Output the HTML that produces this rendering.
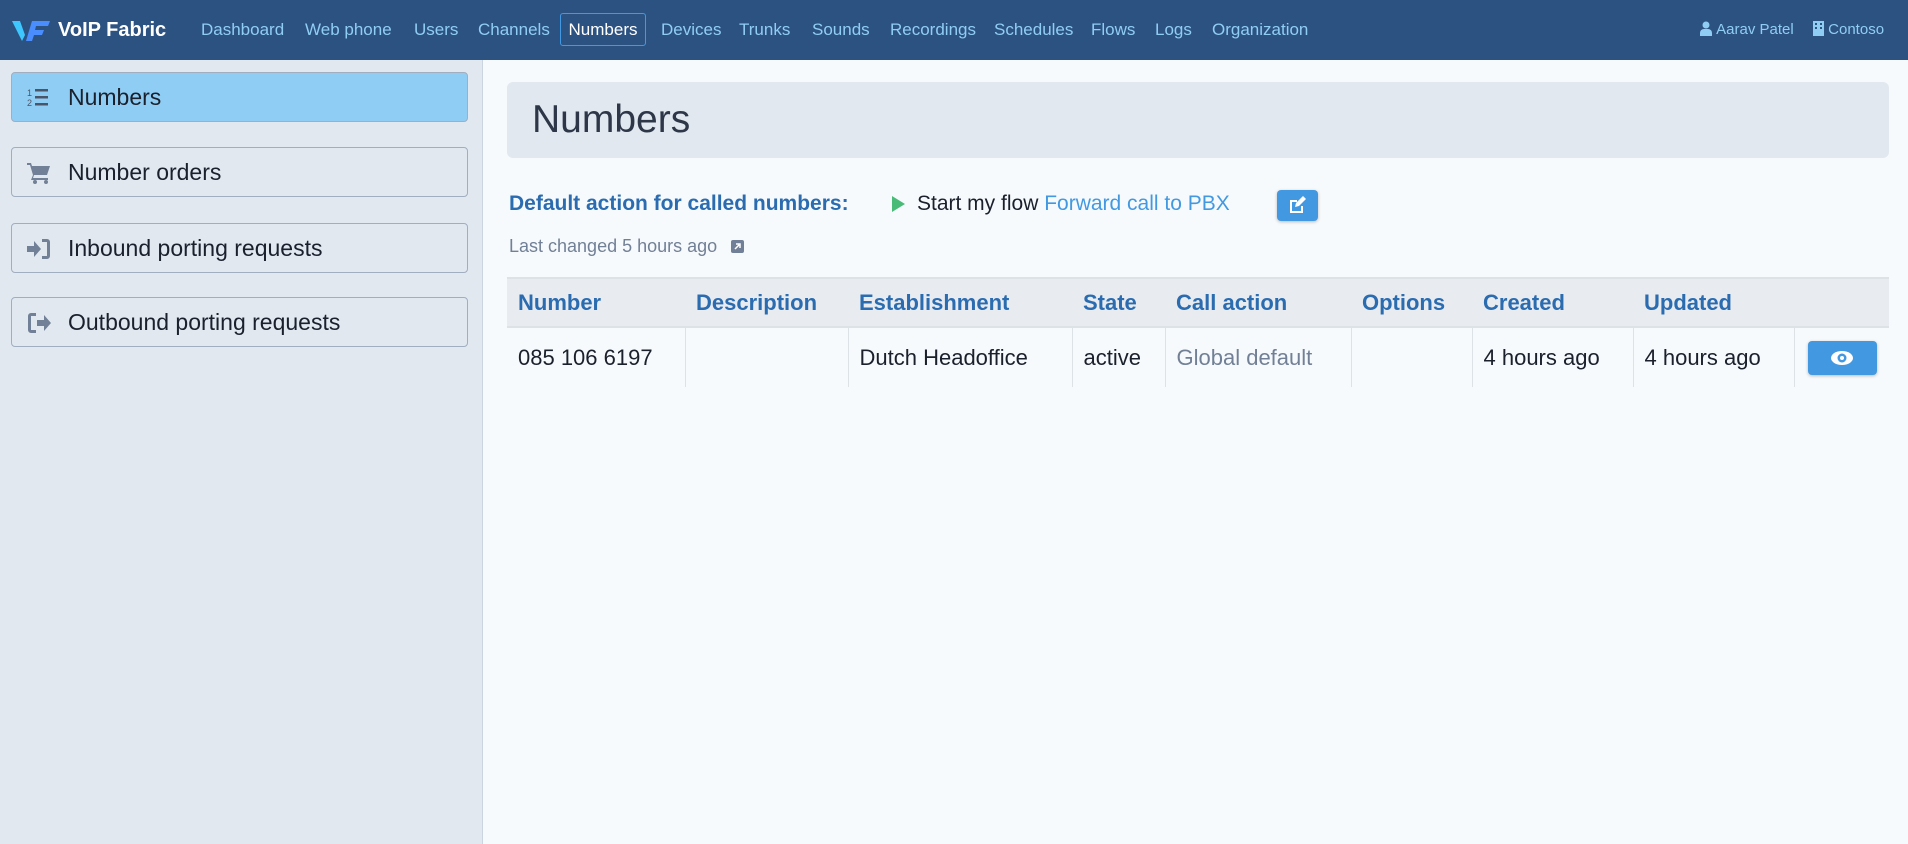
<!DOCTYPE html>
<html><head><meta charset="utf-8"><style>
*{box-sizing:border-box;margin:0;padding:0}
body{width:1908px;height:844px;overflow:hidden;font-family:"Liberation Sans",sans-serif;background:#f7fafc;position:relative}
.nav{position:absolute;left:0;top:0;width:1908px;height:60px;background:#2c5282}
.nav a{position:absolute;top:20px;font-size:17px;color:#90cdf4;white-space:nowrap}
.logo{position:absolute;left:12px;top:17px;display:flex;align-items:center;color:#fff;font-size:20px;font-weight:bold}
.side{position:absolute;left:0;top:60px;width:483px;height:784px;background:#e2e8f0;border-right:1px solid #cbd5e0}
.item{position:absolute;left:11px;width:457px;height:50px;border:1px solid #a0aec0;border-radius:4px;font-size:23px;color:#1a202c;padding-left:56px;line-height:48px}
.item svg{position:absolute;left:15px;top:14px}
.hdr{position:absolute;left:507px;top:82px;width:1382px;height:76px;background:#e2e8f0;border-radius:6px;font-size:39px;color:#2d3748;padding-left:25px;line-height:76px}
.t{position:absolute;white-space:nowrap}
table{position:absolute;left:507px;top:277px;width:1382px;border-collapse:collapse}
th{height:49px;background:#e8ecf0;color:#2b6cb0;font-size:22px;font-weight:600;text-align:left;padding-left:11px;border-top:2px solid #dde2e7;border-bottom:2px solid #dde2e7}
td{height:60px;font-size:22px;color:#1a202c;padding-left:11px;border-left:1px solid #dde2e7}
td:first-child{border-left:none}
.btn{display:inline-block;background:#4299e1;border-radius:4px;box-shadow:0 1px 3px rgba(0,0,0,.25)}
</style></head><body>
<div class="nav">
 <div class="logo"><svg width="38" height="26" viewBox="0 0 38 26"><path d="M0 4 L8 4 L13 18 L10 24 Z" fill="#3ec6ff"/><path d="M14 24 L20 4 L38 4 L36 9 L24 9 L23 13 L32 13 L30 18 L22 18 L20 24 Z" fill="#4a8dff"/></svg><span style="margin-left:8px">VoIP Fabric</span></div>
 <a style="left:201px">Dashboard</a><a style="left:305px">Web phone</a><a style="left:414px">Users</a><a style="left:478px">Channels</a>
 <a style="left:560px;top:13px;height:33px;width:86px;border:1px solid #4299e1;border-radius:3px;color:#fff;text-align:center;line-height:31px">Numbers</a>
 <a style="left:661px">Devices</a><a style="left:739px">Trunks</a><a style="left:812px">Sounds</a><a style="left:890px">Recordings</a><a style="left:994px">Schedules</a><a style="left:1091px">Flows</a><a style="left:1155px">Logs</a><a style="left:1212px">Organization</a>
 <a style="left:1700px;top:21px;font-size:15px"><svg width="12" height="15" viewBox="0 0 12 15" style="vertical-align:-2px"><circle cx="6" cy="4" r="3.5" fill="#90cdf4"/><path d="M0 15v-3a4 4 0 014-4h4a4 4 0 014 4v3z" fill="#90cdf4"/></svg>&nbsp;Aarav Patel</a>
 <a style="left:1813px;top:21px;font-size:15px"><svg width="11" height="15" viewBox="0 0 11 15" style="vertical-align:-2px"><rect width="11" height="15" fill="#90cdf4"/><rect x="2" y="2" width="2" height="2" fill="#2c5282"/><rect x="7" y="2" width="2" height="2" fill="#2c5282"/><rect x="2" y="6" width="2" height="2" fill="#2c5282"/><rect x="7" y="6" width="2" height="2" fill="#2c5282"/></svg>&nbsp;Contoso</a>
</div>
<div class="side">
 <div class="item" style="top:12px;background:#90cdf4"><svg width="22" height="20" viewBox="0 0 22 20" fill="#4a5568"><text x="0" y="9" font-size="9" font-family="Liberation Sans">1</text><text x="0" y="19" font-size="9" font-family="Liberation Sans">2</text><rect x="8" y="2" width="13" height="2.5"/><rect x="8" y="9" width="13" height="2.5"/><rect x="8" y="16" width="13" height="2.5"/></svg>Numbers</div>
 <div class="item" style="top:87px"><svg width="24" height="22" viewBox="0 0 24 22" fill="#718096"><path d="M0 1h4l1 3h18l-3 9H7l-1 3h15v2H4l2-5L3 3H0z"/><circle cx="8" cy="20" r="2"/><circle cx="19" cy="20" r="2"/></svg>Number orders</div>
 <div class="item" style="top:163px"><svg width="24" height="22" viewBox="0 0 24 22" fill="#718096"><path d="M0 8h7V3l7 8-7 8v-5H0z"/><path d="M15 1h5a3 3 0 013 3v14a3 3 0 01-3 3h-5v-3h5V4h-5z"/></svg>Inbound porting requests</div>
 <div class="item" style="top:237px"><svg width="24" height="22" viewBox="0 0 24 22" fill="#718096"><path d="M9 1H4a3 3 0 00-3 3v14a3 3 0 003 3h5v-3H4V4h5z"/><path d="M10 8h7V3l7 8-7 8v-5h-7z"/></svg>Outbound porting requests</div>
</div>
<div class="hdr">Numbers</div>
<div class="t" style="left:509px;top:192px;font-size:21px;color:#2b6cb0;font-weight:600">Default action for called numbers:</div>
<div class="t" style="left:892px;top:196px;width:0;height:0;border-left:13px solid #48bb78;border-top:8px solid transparent;border-bottom:8px solid transparent"></div>
<div class="t" style="left:917px;top:192px;font-size:21px;color:#1a202c">Start my flow <span style="color:#4299e1">Forward call to PBX</span></div>
<div class="btn t" style="left:1277px;top:190px;width:41px;height:31px"><svg width="41" height="31" viewBox="0 0 41 31"><path d="M13 10h7v2h-5v9h9v-5h2v7H13z" fill="#fff"/><path d="M18 17l1-4 7-7 3 3-7 7z" fill="#fff"/></svg></div>
<div class="t" style="left:509px;top:236px;font-size:18px;color:#718096">Last changed 5 hours ago <svg width="13" height="13" viewBox="0 0 13 13" style="margin-left:9px;vertical-align:-1px"><rect width="13" height="13" rx="2" fill="#718096"/><path d="M4 9l4-4M5 4h4v4" stroke="#fff" stroke-width="1.5" fill="none"/></svg></div>
<table>
<tr><th style="width:178px">Number</th><th style="width:163px">Description</th><th style="width:224px">Establishment</th><th style="width:93px">State</th><th style="width:186px">Call action</th><th style="width:121px">Options</th><th style="width:161px">Created</th><th style="width:161px">Updated</th><th></th></tr>
<tr><td>085 106 6197</td><td></td><td>Dutch Headoffice</td><td>active</td><td style="color:#718096">Global default</td><td></td><td>4 hours ago</td><td>4 hours ago</td><td><span class="btn" style="width:69px;height:34px;margin-left:2px;vertical-align:middle;text-align:center"><svg width="24" height="34" viewBox="0 0 24 34"><ellipse cx="12" cy="17" rx="11" ry="7" fill="#fff"/><circle cx="12" cy="17" r="4.5" fill="#4299e1"/><circle cx="12" cy="17" r="2" fill="#fff"/></svg></span></td></tr>
</table>
</body></html>
